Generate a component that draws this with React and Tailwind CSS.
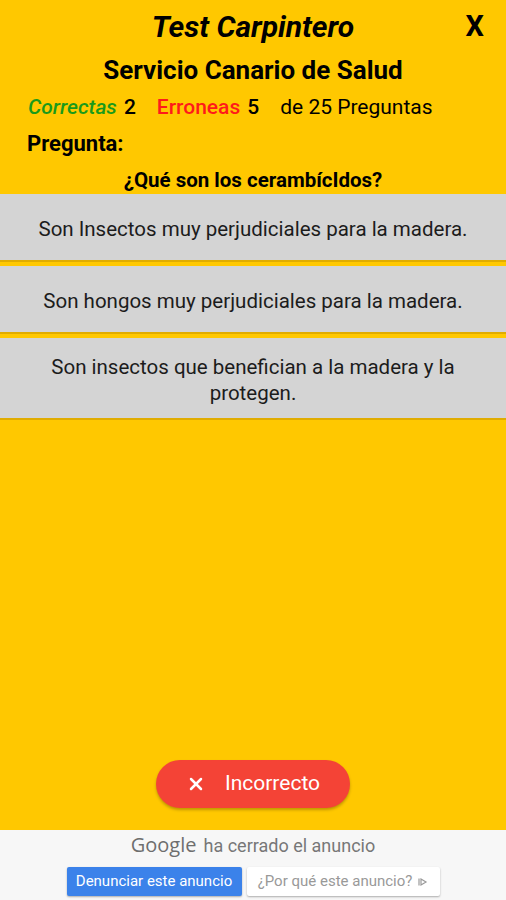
import { X } from "lucide-react";

const options = [
  "Son Insectos muy perjudiciales para la madera.",
  "Son hongos muy perjudiciales para la madera.",
  "Son insectos que benefician a la madera y la protegen.",
];

export default function App() {
  return (
    <div className="w-[506px] h-[900px] bg-[#ffc800] flex flex-col overflow-hidden" style={{ fontFamily: "Roboto, 'Liberation Sans', sans-serif" }}>
      {/* header */}
      <div className="relative h-[52px] flex items-center justify-center">
        <h1 className="text-[30px] font-bold italic text-black pt-[2px] leading-[36px]">Test Carpintero</h1>
        <span className="absolute right-[22px] top-[8px] text-[29px] font-bold text-black leading-[36px]">X</span>
      </div>
      <h2 className="text-center text-[26px] font-bold text-black leading-[32px] mt-[2px]">Servicio Canario de Salud</h2>
      <div className="flex items-center px-[28px] mt-[8px] text-[21px] leading-[26px] text-black">
        <span className="italic font-medium text-[#1a9a1a]">Correctas</span>
        <span className="ml-[7px] font-medium">2</span>
        <span className="ml-[21px] font-medium text-[#ff1a1a]">Erroneas</span>
        <span className="ml-[7px] font-medium">5</span>
        <span className="ml-[21px]">de 25 Preguntas</span>
      </div>
      <div className="px-[27px] mt-[11px] text-[22px] font-bold leading-[26px] text-black">Pregunta:</div>
      <div className="text-center text-[20.5px] font-bold leading-[24px] mt-[11px] text-black">¿Qué son los cerambícIdos?</div>

      <div className="flex flex-col gap-[4px] mt-[2px]">
        {options.map((o, i) => (
          <div
            key={i}
            className={`bg-[#d4d4d4] border-b-2 border-[#e0ac00] flex items-center justify-center text-center px-[20px] pt-[4px] text-[20.5px] leading-[26px] text-[#1c1c1c] ${i === 2 ? "h-[82px]" : "h-[68px]"}`}
          >
            {o}
          </div>
        ))}
      </div>

      <div className="flex-1 flex items-end justify-center pb-[22px]">
        <button className="w-[194px] h-[48px] rounded-full bg-[#f44336] shadow-[0_2px_3px_rgba(0,0,0,0.25)] flex items-center justify-center gap-[19px] text-white text-[21px]">
          <X className="w-[20px] h-[20px]" strokeWidth={3} />
          <span>Incorrecto</span>
        </button>
      </div>

      {/* ad footer */}
      <div className="h-[70px] bg-[#f7f7f7] flex flex-col items-center">
        <div className="flex items-baseline gap-[7px] mt-[4px] text-[#777] leading-[22px]">
          <span className="text-[20px] font-medium text-[#6e6e6e]" style={{ fontFamily: "'Open Sans', Roboto, sans-serif" }}>Google</span>
          <span className="text-[18px]">ha cerrado el anuncio</span>
        </div>
        <div className="flex gap-[5px] mt-[10px]">
          <div className="w-[175px] h-[29px] bg-[#3b82ea] rounded-[2px] flex items-center justify-center text-white text-[15px] shadow-[0_1px_2px_rgba(0,0,0,0.3)]">
            Denunciar este anuncio
          </div>
          <div className="w-[193px] h-[29px] bg-white rounded-[2px] flex items-center justify-center gap-[6px] text-[#999] text-[15px] shadow-[0_1px_2px_rgba(0,0,0,0.3)]">
            <span>¿Por qué este anuncio?</span>
            <svg width="10" height="10" viewBox="0 0 10 10" fill="none" stroke="#999" strokeWidth="1.2">
              <path d="M1 1.5v7M3 2l5 3-5 3z" />
            </svg>
          </div>
        </div>
      </div>
    </div>
  );
}
